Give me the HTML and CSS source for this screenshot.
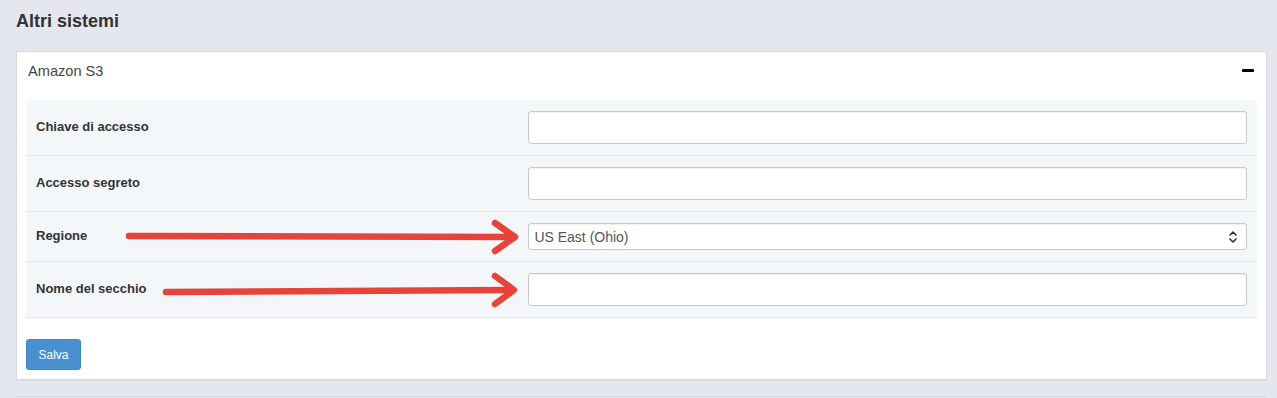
FILE: index.html
```html
<!DOCTYPE html>
<html lang="it">
<head>
<meta charset="utf-8">
<title>Altri sistemi</title>
<link rel="stylesheet" href="styles.css">
</head>
<body>
<h2 class="page-title">Altri sistemi</h2>
<div class="panel">
  <div class="panel-head">
    <span class="panel-title">Amazon S3</span>
    <span class="collapse-icon"></span>
  </div>
  <div class="panel-body">
    <div class="form-table">
      <div class="form-row">
        <div class="cell-label">Chiave di accesso</div>
        <div class="cell-field"><input class="text-input" type="text"></div>
      </div>
      <div class="form-row">
        <div class="cell-label">Accesso segreto</div>
        <div class="cell-field"><input class="text-input" type="text"></div>
      </div>
      <div class="form-row">
        <div class="cell-label">Regione</div>
        <div class="cell-field">
          <div class="select-wrap">
            <select class="select-input"><option>US East (Ohio)</option></select>
            <svg class="select-caret" width="8" height="14" viewBox="0 0 8 14"><path d="M1 5 L4 2 L7 5 M1 9 L4 12 L7 9" fill="none" stroke="#333" stroke-width="1.6" stroke-linecap="round" stroke-linejoin="round"/></svg>
          </div>
        </div>
      </div>
      <div class="form-row">
        <div class="cell-label">Nome del secchio</div>
        <div class="cell-field"><input class="text-input" type="text"></div>
      </div>
    </div>
    <button class="btn-save" type="button">Salva</button>
  </div>
</div>
<div class="panel panel-next"></div>
<svg class="annotations" width="1277" height="398" viewBox="0 0 1277 398">
  <g fill="none" stroke="#e8433a" stroke-width="6.5" stroke-linecap="round" stroke-linejoin="round">
    <path d="M129 236 L512 237"/>
    <path d="M495 223 L515 237 L495 251"/>
    <path d="M166 292 L511 290"/>
    <path d="M495 276 L514 290 L495 304"/>
  </g>
</svg>
</body>
</html>
```
FILE: styles.css
```css
html, body {
  margin: 0;
  padding: 0;
}
body {
  background: #e4e8ee;
  font-family: "Liberation Sans", Arial, sans-serif;
  color: #333;
  padding: 11px 10px 0 16px;
  height: 398px;
  box-sizing: border-box;
  overflow: hidden;
  position: relative;
}
.page-title {
  margin: 0 0 20px 0;
  font-size: 18px;
  line-height: 20px;
  font-weight: bold;
  color: #333;
}
.panel {
  background: #fff;
  border: 1px solid #d6dae0;
  box-shadow: 0 1px 1px rgba(0, 0, 0, 0.04);
}
.panel-head {
  display: flex;
  justify-content: space-between;
  align-items: center;
  padding: 9px 12px 0 11px;
  height: 20px;
}
.panel-title {
  font-size: 14.6px;
  line-height: 20px;
  color: #444;
}
.collapse-icon {
  width: 12px;
  height: 3.5px;
  background: #000;
  border-radius: 1px;
  margin-top: -1px;
}
.panel-body {
  padding: 19px 9px 9px 9px;
}
.form-table {
  display: flex;
  flex-direction: column;
}
.form-row {
  display: grid;
  grid-template-columns: 40% 60%;
  align-items: center;
  background: #f4f7fa;
  border-bottom: 1px solid #e2e7ed;
}
.cell-label {
  padding: 0 10px;
  font-size: 13px;
  font-weight: bold;
  color: #333;
  margin-top: -3px;
}
.cell-field {
  padding: 11px 10px;
}
.text-input {
  display: block;
  width: 100%;
  height: 33px;
  box-sizing: border-box;
  border: 1px solid #c9c9c9;
  border-radius: 3px;
  background: #fff;
  box-shadow: inset 0 1px 1px rgba(0, 0, 0, 0.06);
  margin: 0;
}
.select-wrap {
  position: relative;
}
.select-input {
  display: block;
  width: 100%;
  height: 27px;
  box-sizing: border-box;
  appearance: none;
  -webkit-appearance: none;
  border: 1px solid #c9c9c9;
  border-radius: 3px;
  background: #fff;
  box-shadow: inset 0 1px 1px rgba(0, 0, 0, 0.06);
  padding: 0 5px;
  font-family: "Liberation Sans", Arial, sans-serif;
  font-size: 14px;
  color: #555;
  margin: 0;
}
.select-caret {
  position: absolute;
  right: 10px;
  top: 6.5px;
  pointer-events: none;
}
.btn-save {
  display: block;
  margin-top: 21px;
  height: 31px;
  width: 55px;
  padding: 0;
  border: 1px solid #3f86c7;
  border-radius: 3px;
  background: #4a8fd0;
  color: #fff;
  font-family: "Liberation Sans", Arial, sans-serif;
  font-size: 12px;
}
.panel-next {
  margin-top: 16px;
  height: 0;
  border-bottom: none;
  box-shadow: none;
}
.annotations {
  position: absolute;
  left: 0;
  top: 0;
  pointer-events: none;
}
```
